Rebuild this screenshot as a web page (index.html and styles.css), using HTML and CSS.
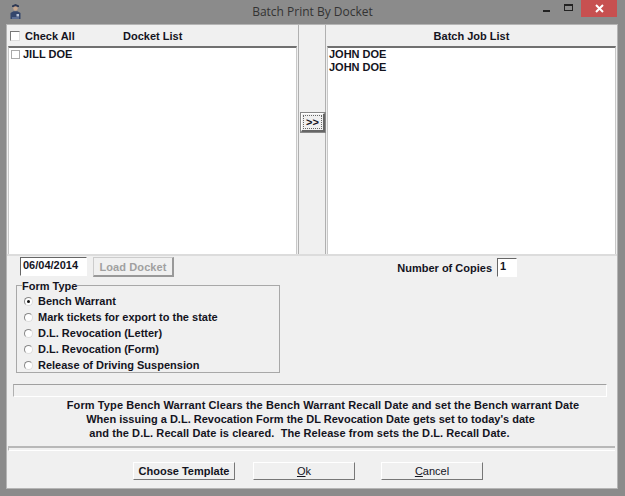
FILE: index.html
```html
<!DOCTYPE html>
<html lang="en">
<head>
  <meta charset="UTF-8" />
  <title>Batch Print By Docket</title>
  <link rel="stylesheet" href="styles.css">
</head>
<body>
  <div class="titlebar">
    <svg class="app-icon" width="11" height="15" viewBox="0 0 11 15">
      <path d="M2 1.5L5.5 0 9 1.5V3H2z" fill="#2f3a55"/>
      <circle cx="5.5" cy="4.5" r="2.2" fill="#c9a78e"/>
      <path d="M0.5 15V9L3.5 7.3h4L10.5 9v6z" fill="#34466c"/>
      <rect x="6.5" y="10" width="2.5" height="2.5" fill="#b9c4d8"/>
      <rect x="2" y="13" width="7" height="2" fill="#5a6c92"/>
    </svg>
    <div class="title">Batch Print By Docket</div>
    <div class="win-controls">
      <span class="win-min"></span>
      <span class="win-max"></span>
      <span class="win-close">
        <svg width="9" height="9" viewBox="0 0 9 9"><path d="M1 1l7 7M8 1L1 8" stroke="#fff" stroke-width="2"/></svg>
      </span>
    </div>
  </div>

  <div class="client">
    <div class="lists">
      <div class="list-panel">
        <div class="list-head">
          <label class="check-all"><span class="check"></span>Check All</label>
          <span class="docket-title">Docket List</span>
        </div>
        <div class="list-box">
          <div class="docket-row"><span class="check check-small"></span>JILL DOE</div>
        </div>
      </div>
      <div class="move-col">
        <button type="button" class="move-btn"><span>&gt;&gt;</span></button>
      </div>
      <div class="list-panel">
        <div class="list-head list-head-center">Batch Job List</div>
        <div class="list-box list-box-jobs">
          <div>JOHN DOE</div>
          <div>JOHN DOE</div>
        </div>
      </div>
    </div>

    <div class="options">
      <div class="options-left">
        <div class="date-row">
          <div class="field date-field">06/04/2014</div>
          <button type="button" class="btn btn-load">Load Docket</button>
        </div>
        <fieldset class="form-type">
          <legend>Form Type</legend>
          <div class="radio-row"><span class="radio radio-on"></span>Bench Warrant</div>
          <div class="radio-row"><span class="radio"></span>Mark tickets for export to the state</div>
          <div class="radio-row"><span class="radio"></span>D.L. Revocation (Letter)</div>
          <div class="radio-row"><span class="radio"></span>D.L. Revocation (Form)</div>
          <div class="radio-row"><span class="radio"></span>Release of Driving Suspension</div>
        </fieldset>
      </div>
      <div class="copies">
        <span>Number of Copies</span>
        <div class="field copies-field">1</div>
      </div>
    </div>

    <div class="progress"></div>

    <div class="note">
      <div class="note-first">Form Type Bench Warrant Clears the Bench Warrant Recall Date and set the Bench warrant Date</div>
      <div>When issuing a D.L. Revocation Form the DL Revocation Date gets set to today's date</div>
      <div class="note-last">and the D.L. Recall Date is cleared.&nbsp; The Release from sets the D.L. Recall Date.</div>
    </div>

    <div class="divider"></div>

    <div class="actions">
      <button type="button" class="btn btn-template">Choose Template</button>
      <button type="button" class="btn btn-ok"><u>O</u>k</button>
      <button type="button" class="btn btn-cancel"><u>C</u>ancel</button>
    </div>
  </div>
</body>
</html>
```

FILE: styles.css
```css
:root {
  --frame: #8b8b8b;
  --face: #f0f0f0;
  --text: #14141e;
  --edge-dark: #707070;
  --edge-mid: #a8a8a8;
}

* {
  box-sizing: border-box;
}

body {
  margin: 0;
  width: 625px;
  height: 496px;
  overflow: hidden;
  background-color: var(--frame);
  font-family: "Liberation Sans", Arial, sans-serif;
  font-size: 11px;
  font-weight: bold;
  color: var(--text);
}

.titlebar {
  height: 25px;
  display: flex;
  align-items: flex-start;
  padding-left: 10px;
}

.app-icon {
  margin-top: 4px;
}

.title {
  flex: 1;
  text-align: center;
  font-family: "Open Sans", "Liberation Sans", sans-serif;
  font-size: 12px;
  font-weight: normal;
  line-height: 24px;
  color: #333;
  padding-left: 61px;
}

.win-controls {
  display: flex;
  align-items: flex-start;
  margin-right: 8px;
}

.win-min {
  width: 7px;
  height: 2px;
  margin: 10px 14px 0 0;
  background-color: #222;
}

.win-max {
  width: 9px;
  height: 7px;
  margin: 4px 8px 0 0;
  border: 1px solid #222;
  border-top-width: 2px;
}

.win-close {
  width: 36px;
  height: 17px;
  background-color: #c75050;
  display: flex;
  align-items: center;
  justify-content: center;
}

.client {
  height: 463px;
  margin: 0 8px 0 7px;
  background-color: var(--face);
  box-shadow: 0 0 0 1px #b5b5b5;
}

.lists {
  height: 231px;
  display: grid;
  grid-template-columns: 291px 28px 291px;
  border-bottom: 2px solid #dcdcdc;
}

.list-panel {
  display: flex;
  flex-direction: column;
  min-width: 0;
}

.list-head {
  height: 21px;
  display: flex;
  align-items: center;
  padding-left: 3px;
}

.list-head-center {
  justify-content: center;
  padding-left: 0;
}

.check-all {
  display: flex;
  align-items: center;
  width: 113px;
}

.docket-title {
  font-weight: bold;
}

.check {
  width: 10px;
  height: 10px;
  margin-right: 5px;
  background-color: #fff;
  border: 1px solid #777;
  border-right-color: #ddd;
  border-bottom-color: #ddd;
}

.check-small {
  margin-left: 2px;
  margin-right: 3px;
  width: 9px;
  height: 9px;
  border-color: #aaa;
}

.list-box {
  flex: 1;
  margin: 0 1px;
  background-color: #fff;
  border-top: 2px solid var(--edge-dark);
  border-left: 1px solid #c8c8c8;
  border-right: 1px solid #c8c8c8;
  line-height: 13px;
}

.list-box-jobs {
  padding-left: 1px;
}

.docket-row {
  display: flex;
  align-items: center;
}

.move-col {
  display: flex;
  justify-content: center;
  align-items: flex-start;
  padding-top: 88px;
  padding-left: 2px;
  border-left: 1px solid #b0b0b0;
  border-right: 1px solid #b0b0b0;
  background-color: var(--face);
}

.move-btn {
  width: 24px;
  height: 19px;
  padding: 1px;
  background-color: var(--face);
  border: 1px solid #fff;
  border-right: 2px solid #666;
  border-bottom: 2px solid #666;
  box-shadow: 0 0 0 1px #888;
  font: inherit;
  color: inherit;
}

.move-btn span {
  display: block;
  line-height: 12px;
  border: 1px dotted #666;
}

.options {
  height: 128px;
  display: flex;
  justify-content: space-between;
}

.options-left {
  width: 280px;
  padding: 1px 0 0 9px;
}

.date-row {
  display: flex;
  align-items: flex-start;
  padding-left: 4px;
  gap: 6px;
}

.field {
  background-color: #fff;
  border-top: 1px solid #666;
  border-left: 1px solid #666;
  border-right: 1px solid #fff;
  border-bottom: 1px solid #fff;
}

.date-field {
  width: 67px;
  height: 19px;
  line-height: 15px;
  padding-left: 2px;
}

.btn {
  height: 18px;
  padding: 0;
  background-color: var(--face);
  border: 1px solid #fff;
  border-right: 1px solid #777;
  border-bottom: 1px solid #777;
  font-family: inherit;
  font-size: 11px;
  font-weight: bold;
  color: inherit;
}

.btn-load {
  width: 81px;
  height: 20px;
  color: #a0a0a0;
  letter-spacing: 0.1px;
  border-right-width: 2px;
  border-bottom-width: 2px;
  border-right-color: #999;
  border-bottom-color: #999;
  border-left-color: #ccc;
  border-top-color: #ccc;
}

.form-type {
  margin: 2px 0 0;
  padding: 1px 0 0 7px;
  width: 264px;
  height: 94px;
  border: 1px solid var(--edge-mid);
  min-width: 0;
}

.form-type legend {
  padding: 2px 0 0;
  margin-left: -2px;
  line-height: 11px;
}

.radio-row {
  display: flex;
  align-items: center;
  height: 16px;
}

.radio {
  width: 9px;
  height: 9px;
  margin-right: 5px;
  border-radius: 50%;
  background-color: #fff;
  border: 1px solid #888;
  border-right-color: #ddd;
  border-bottom-color: #ddd;
  display: flex;
  align-items: center;
  justify-content: center;
}

.radio-on::after {
  content: "";
  width: 3px;
  height: 3px;
  border-radius: 50%;
  background-color: #111;
}

.copies {
  display: flex;
  align-items: flex-start;
  gap: 5px;
  margin-right: 100px;
  padding-top: 2px;
}

.copies span {
  line-height: 17px;
  padding-top: 2px;
}

.copies-field {
  width: 20px;
  height: 19px;
  line-height: 15px;
  padding-left: 2px;
}

.progress {
  height: 13px;
  margin: 0 10px 0 6px;
  border-top: 1px solid #a0a0a0;
  border-left: 1px solid #b0b0b0;
  border-right: 1px solid #fff;
  border-bottom: 1px solid #fff;
}

.note {
  height: 49px;
  padding-top: 1px;
  padding-right: 3px;
  text-align: center;
  line-height: 14px;
}

.note-first {
  padding-left: 25px;
  letter-spacing: 0.1px;
}

.note-last {
  padding-right: 22px;
  letter-spacing: 0.08px;
}

.divider {
  height: 5px;
  margin: 0 2px 0 1px;
  border-top: 2px solid #b8b8b8;
  border-bottom: 1px solid #fff;
  border-left: 1px solid #b8b8b8;
}

.actions {
  height: 40px;
  padding: 11px 0 0 126px;
  display: flex;
  align-items: flex-start;
}

.btn-template {
  width: 102px;
  margin-right: 18px;
}

.btn-ok {
  width: 102px;
  margin-right: 26px;
  font-weight: normal;
}

.btn-cancel {
  width: 102px;
  font-weight: normal;
}
```
